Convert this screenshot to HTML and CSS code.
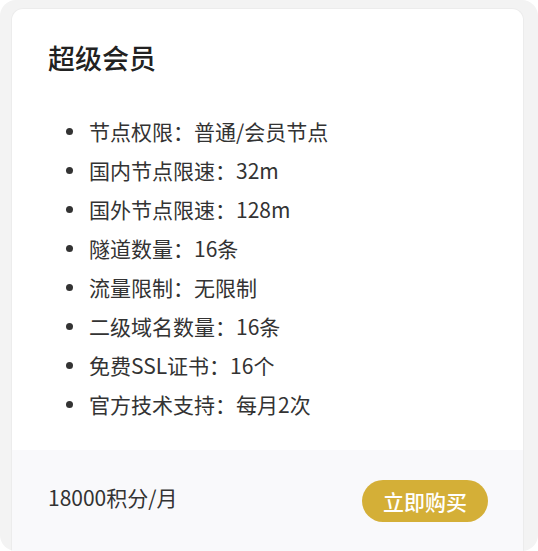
FILE: index.html
```html
<!DOCTYPE html>
<html lang="zh-CN">
<head>
    <meta charset="UTF-8">
    <meta name="viewport" content="width=device-width, initial-scale=1.0">
    <title>超级会员</title>
    <link rel="stylesheet" href="styles.css">
</head>
<body>
    <div class="wrapper">
        <div class="plan-card">
            <div class="plan-body">
                <h2 class="plan-title">超级会员</h2>
                <ul class="feature-list">
                    <li>节点权限：普通/会员节点</li>
                    <li>国内节点限速：32m</li>
                    <li>国外节点限速：128m</li>
                    <li>隧道数量：16条</li>
                    <li>流量限制：无限制</li>
                    <li>二级域名数量：16条</li>
                    <li>免费SSL证书：16个</li>
                    <li>官方技术支持：每月2次</li>
                </ul>
            </div>
            <div class="plan-footer">
                <span class="plan-price">18000积分/月</span>
                <button class="buy-btn">立即购买</button>
            </div>
        </div>
    </div>
</body>
</html>
```

FILE: styles.css
```css
body {
    margin: 0;
    background-color: #ffffff;
    font-family: "Noto Sans CJK SC", "Noto Sans", sans-serif;
    color: #333;
}

.wrapper {
    height: 551px;
    box-sizing: border-box;
    padding: 8px 14px 0 11px;
    background-color: #f3f3f3;
    border-radius: 16px;
    overflow: hidden;
}

.plan-card {
    background-color: #fff;
    border: 1px solid #ececec;
    border-bottom: none;
    border-radius: 12px 12px 0 0;
    height: 600px;
    overflow: hidden;
}

.plan-body {
    padding: 31px 36px 22px 36px;
}

.plan-title {
    margin: 0;
    font-size: 27px;
    line-height: 36px;
    font-weight: 500;
    color: #222;
}

.feature-list {
    list-style: none;
    margin: 40px 0 0 0;
    padding: 0 0 0 18px;
}

.feature-list li {
    display: flex;
    align-items: center;
    gap: 16px;
    font-size: 21px;
    line-height: 30px;
    margin-bottom: 9px;
}

.feature-list li::before {
    content: "";
    width: 7px;
    height: 7px;
    border-radius: 50%;
    background-color: #333;
    flex-shrink: 0;
}

.plan-footer {
    display: flex;
    justify-content: space-between;
    align-items: center;
    background-color: #f9f9fb;
    padding: 30px 35px 30px 36px;
}

.plan-price {
    font-size: 21px;
    color: #333;
    margin-top: -9px;
}

.buy-btn {
    background-color: #d4af37;
    color: #fff;
    border: none;
    border-radius: 21px;
    height: 42px;
    padding: 0 21px;
    font-family: inherit;
    font-size: 21px;
    font-weight: 500;
    cursor: pointer;
}
```
